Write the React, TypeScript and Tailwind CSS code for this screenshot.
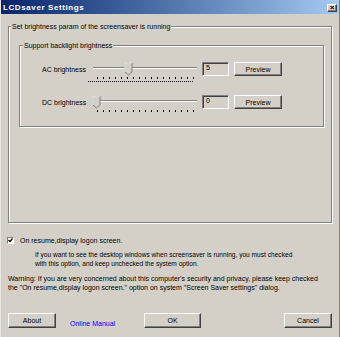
import React from "react";

const raised =
    "border border-t-white border-l-white border-r-[#404040] border-b-[#404040] shadow-[inset_-1px_-1px_0_#808080] bg-[#d4d0c8]";

function Slider({thumb, focus}: { thumb: number; focus?: boolean }) {
    const ticks = Array.from({length: 17}, (_, i) => 9 + i * 6);
    return (
        <svg width="111" height="20" viewBox="0 0 111 20" className="block">
            <line x1="5" y1="5.5" x2="109" y2="5.5" stroke="#808080"/>
            <line x1="5" y1="6.5" x2="109" y2="6.5" stroke="#ffffff"/>
            {ticks.map((x) => (
                <line key={x} x1={x + 0.5} y1="15" x2={x + 0.5} y2="17" stroke="#000"/>
            ))}
            {focus && (
                <line x1="0" y1="19.5" x2="106" y2="19.5" stroke="#000" strokeDasharray="1 1"/>
            )}
            <path
                d={`M${thumb} 1 H${thumb + 7} V10 L${thumb + 3.5} 13 L${thumb} 10 Z`}
                fill="#d4d0c8"
                stroke="#808080"
            />
            <path d={`M${thumb} 10 V1 H${thumb + 7}`} fill="none" stroke="#fff"/>
        </svg>
    );
}

function BrightRow({label, value, thumb, focus}: { label: string; value: string; thumb: number; focus?: boolean }) {
    return (
        <div className="flex items-start h-[14px]">
            <div className="ml-[22px] w-[46px] h-[14px] flex items-center">{label}</div>
            <Slider thumb={thumb} focus={focus}/>
            <div
                className="ml-[3px] w-[27px] h-[14px] bg-[#d4d0c8] border border-t-[#808080] border-l-[#808080] border-r-white border-b-white shadow-[inset_1px_1px_0_#404040] pl-[3px] leading-[10px]">
                {value}
            </div>
            <div className={`ml-[5px] w-[48px] h-[14px] flex items-center justify-center ${raised}`}>
                Preview
            </div>
        </div>
    );
}

export default function App() {
    return (
        <div
            className="w-[340px] h-[337px] overflow-hidden bg-[#d4d0c8] border-l border-l-[#e8e6e0] border-r border-r-[#808080] font-['Liberation_Sans',Arial,sans-serif] text-[7px] text-black leading-[9px]">
            {/* Barre de titre */}
            <div className="h-[14px] flex items-center justify-between bg-gradient-to-r from-[#0a246a] to-[#a6caf0] pl-[2px] pr-[2px]">
                <span className="text-white font-bold text-[8px] tracking-[0.6px]">LCDsaver Settings</span>
                <div className={`w-[10px] h-[8px] mt-[2px] flex items-center justify-center text-[8px] leading-none font-bold ${raised}`}>
                    ×
                </div>
            </div>

            {/* Groupe principal */}
            <div
                className="relative mt-[12px] ml-[7px] w-[324px] h-[197px] border border-[#808080] shadow-[inset_1px_1px_0_#fff,1px_1px_0_#fff]">
                <span className="absolute -top-[5px] left-[2px] px-[1px] bg-[#d4d0c8]">
                    Set brightness param of the screensaver is running
                </span>
                <div
                    className="relative mt-[18px] ml-[10px] w-[305px] h-[82px] border border-[#808080] shadow-[inset_1px_1px_0_#fff,1px_1px_0_#fff]">
                    <span className="absolute -top-[5px] left-[3px] px-[1px] bg-[#d4d0c8]">
                        Support backlight brightness
                    </span>
                    <div className="pt-[16px] flex flex-col gap-[19px]">
                        <BrightRow label="AC brightness" value="5" thumb={37} focus/>
                        <BrightRow label="DC brightness" value="0" thumb={5}/>
                    </div>
                </div>
            </div>

            {/* Options */}
            <div className="mt-[13px] ml-[6px] flex items-center h-[8px] gap-[6px]">
                <div
                    className="w-[7px] h-[7px] bg-white border border-t-[#808080] border-l-[#808080] border-r-white border-b-white flex items-center justify-center">
                    <svg width="5" height="5" viewBox="0 0 5 5">
                        <path d="M0.5 2 L2 3.5 L4.5 0.5" fill="none" stroke="#000" strokeWidth="1.2"/>
                    </svg>
                </div>
                <span>On resume,display logon screen.</span>
            </div>
            <p className="mt-[6px] ml-[34px] whitespace-nowrap text-[6.6px]">
                If you want to see the desktop windows when screensaver is running, you must checked
                <br/>
                with this option, and keep unchecked the system option.
            </p>
            <p className="mt-[6px] ml-[7px] whitespace-nowrap">
                Warning: If you are very concerned about this computer's security and privacy, please keep checked
                <br/>
                the "On resume,display logon screen." option on system "Screen Saver settings" dialog.
            </p>

            {/* Boutons */}
            <div className="mt-[21px] ml-[7px] w-[324px] flex items-start">
                <div className={`w-[48px] h-[15px] flex items-center justify-center ${raised}`}>About</div>
                <span className="ml-[14px] mt-[6px] text-[#0000ff]">Online Manual</span>
                <div className={`ml-[29px] w-[57px] h-[15px] flex items-center justify-center ${raised}`}>OK</div>
                <div className={`ml-auto w-[48px] h-[15px] flex items-center justify-center ${raised}`}>Cancel</div>
            </div>
        </div>
    );
}
